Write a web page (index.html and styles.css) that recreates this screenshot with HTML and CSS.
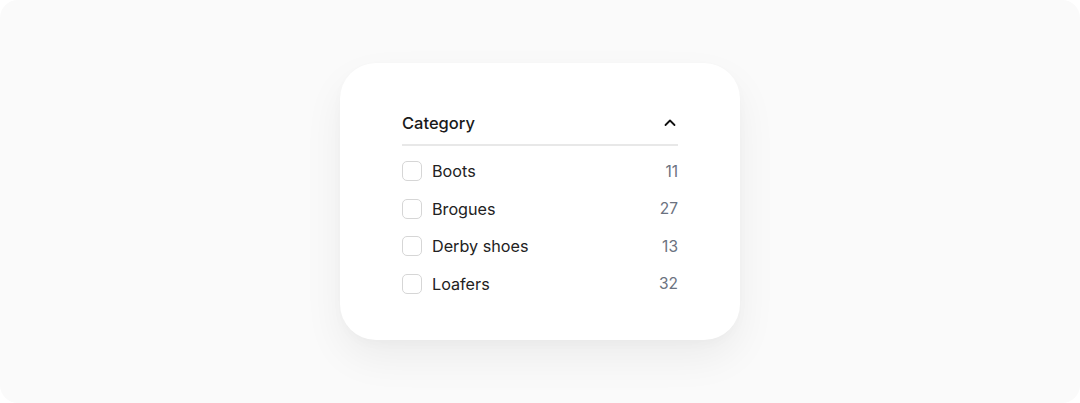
FILE: index.html
```html
<!DOCTYPE html>
<html>
<head>
<meta charset="utf-8">
<link rel="stylesheet" href="styles.css">
</head>
<body>
<div class="stage">
  <div class="card">
    <div class="header">
      <span class="title">Category</span>
      <svg class="chev" width="16" height="16" viewBox="0 0 16 16" fill="none"><path d="M3.5 10L8 5.5L12.5 10" stroke="#111" stroke-width="1.8" stroke-linecap="round" stroke-linejoin="round"/></svg>
    </div>
    <ul class="list">
      <li class="row"><span class="box"></span><span class="label">Boots</span><span class="count">11</span></li>
      <li class="row"><span class="box"></span><span class="label">Brogues</span><span class="count">27</span></li>
      <li class="row"><span class="box"></span><span class="label">Derby shoes</span><span class="count">13</span></li>
      <li class="row"><span class="box"></span><span class="label">Loafers</span><span class="count">32</span></li>
    </ul>
  </div>
</div>
</body>
</html>
```
FILE: styles.css
```css
* { box-sizing: border-box; }
html, body { margin: 0; padding: 0; background: #fff; }
body { font-family: Inter, "Noto Sans", sans-serif; }
.stage {
  width: 1080px;
  height: 403px;
  background: #fafafa;
  border-radius: 18px;
  display: flex;
  justify-content: center;
  align-items: flex-start;
  padding-top: 63px;
}
.card {
  width: 400px;
  height: 277px;
  background: #fff;
  border-radius: 36px;
  padding: 47px 62px 0 62px;
  box-shadow: 0 18px 40px rgba(0,0,0,0.06), 0 4px 12px rgba(0,0,0,0.02);
}
.header {
  display: flex;
  justify-content: space-between;
  align-items: center;
  height: 26px;
  margin-bottom: 8px;
}
.title { font-size: 16.5px; font-weight: 500; color: #1a1a1a; }
.list {
  list-style: none;
  margin: 0;
  padding: 15px 0 0 0;
  border-top: 2px solid #e8e8e8;
  display: flex;
  flex-direction: column;
  gap: 17.5px;
}
.row {
  display: flex;
  align-items: center;
  height: 20px;
}
.box {
  width: 20px;
  height: 20px;
  border: 1.5px solid #d6d6d6;
  border-radius: 5px;
  margin-right: 10px;
  flex: none;
}
.label { flex: 1; font-size: 16.2px; color: #222; }
.count { font-size: 15.5px; color: #6b7280; }
```
